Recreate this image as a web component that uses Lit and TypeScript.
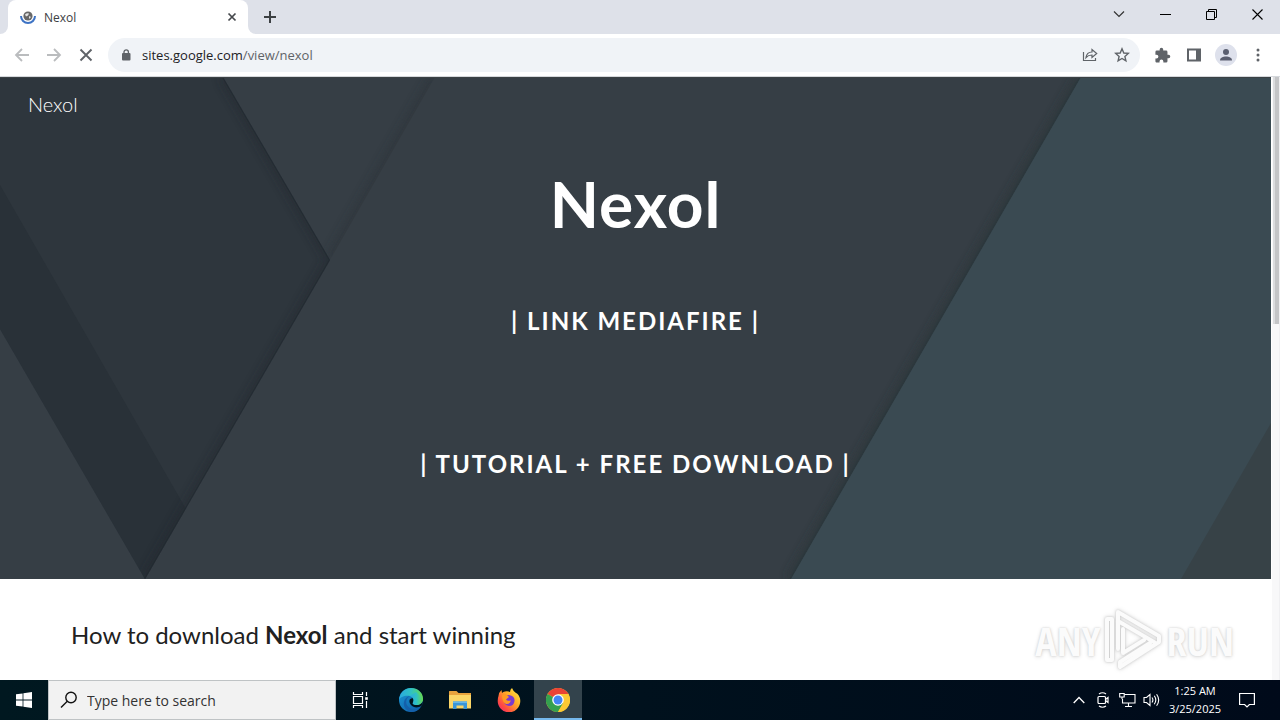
import { LitElement, html, css } from "lit";
import { customElement } from "lit/decorators.js";

@customElement("browser-chrome")
class BrowserChrome extends LitElement {
  static styles = css`
    :host { display: block; font-family: "Open Sans", "Noto Sans", sans-serif; color: #3c4043; }
    button { border: 0; padding: 0; margin: 0; background: none; color: inherit; display: grid; place-items: center; }
    svg { display: block; }
    .tabs { display: flex; height: 34px; background: #dee1e9; align-items: stretch; }
    .edge { width: 8px; background: #fff; }
    .edge i { display: block; height: 34px; background: #dee1e9; border-bottom-right-radius: 8px; }
    .edge.right i { border-radius: 0 0 0 8px; }
    .tab { width: 240px; background: #fff; border-radius: 8px 8px 0 0; display: flex; align-items: center; box-sizing: border-box; padding: 0 8px 0 12px; gap: 8px; font-size: 12px; }
    .tab .name { flex: 1; }
    .close { width: 16px; height: 16px; }
    .new { width: 28px; }
    .grow { flex: 1; }
    .win { width: 46px; height: 28px; color: #111; }
    .bar { display: flex; height: 42px; background: #fff; align-items: center; border-bottom: 1px solid #d5d8dc; padding: 0 6px; }
    .nav { width: 32px; height: 32px; color: #5f6368; }
    .nav:disabled { color: #babcbe; }
    .omni { flex: 1; display: flex; align-items: center; height: 34px; border-radius: 17px; background: #f0f3f7; margin: 0 6px; padding: 0 2px 0 10px; }
    .lock { width: 16px; display: grid; place-items: center; }
    .url { flex: 1; min-width: 0; padding: 0 0 0 8px; font-size: 13px; color: #5f6368; }
    .url b { font-weight: 400; color: #202124; }
    .avatar { width: 22px; height: 22px; border-radius: 50%; background: #dee1ec; display: grid; place-items: center; }
  `;
  render() {
    return html`
      <div class="tabs">
        <div class="edge"><i></i></div>
        <div class="tab">
          <svg width="16" height="16" viewBox="0 0 16 16">
            <circle cx="8" cy="7" r="4.600" fill="#686868"/>
            <path d="M5 5.500q2-2 4-1l-1 2-2 1zM9 7l2 1-2 2z" fill="#e5e5e5"/>
            <path d="M1 7a7 7 0 0 0 14 0" fill="none" stroke="#3e73c4" stroke-width="2"/>
          </svg>
          <span class="name">Nexol</span>
          <button class="close" aria-label="Close tab">
            <svg width="10" height="10" viewBox="0 0 10 10"><path d="M1.500 1.500l7 7M8.500 1.500l-7 7" stroke="#45484c" stroke-width="1.700"/></svg>
          </button>
        </div>
        <div class="edge right"><i></i></div>
        <button class="new" aria-label="New tab">
          <svg width="12" height="12" viewBox="0 0 12 12"><path d="M6 0v12M0 6h12" stroke="#3c4043" stroke-width="2"/></svg>
        </button>
        <div class="grow"></div>
        <button class="win" aria-label="Search tabs"><svg width="12" height="12" viewBox="0 0 12 12"><path d="M1 3.500l5 5 5-5" fill="none" stroke="#333" stroke-width="1.200"/></svg></button>
        <button class="win" aria-label="Minimize"><svg width="11" height="11" viewBox="0 0 11 11"><path d="M0 5.500h11" stroke="#000"/></svg></button>
        <button class="win" aria-label="Restore"><svg width="11" height="11" viewBox="0 0 11 11" fill="none" stroke="#000"><path d="M.5 2.500h8v8h-8zM2.500 2.500v-2h8v8h-2"/></svg></button>
        <button class="win" aria-label="Close"><svg width="11" height="11" viewBox="0 0 11 11"><path d="M.5.5l10 10M10.500.5l-10 10" stroke="#000" stroke-width="1.100"/></svg></button>
      </div>
      <div class="bar">
        <button class="nav" disabled aria-label="Back"><svg width="16" height="14" viewBox="0 0 16 14" fill="none" stroke="currentColor" stroke-width="1.800"><path d="M15 7H2M8 1L2 7l6 6"/></svg></button>
        <button class="nav" disabled aria-label="Forward"><svg width="16" height="14" viewBox="0 0 16 14" fill="none" stroke="currentColor" stroke-width="1.800"><path d="M1 7h13M8 1l6 6-6 6"/></svg></button>
        <button class="nav" aria-label="Stop"><svg width="14" height="14" viewBox="0 0 14 14"><path d="M1.500 1.500l11 11M12.500 1.500l-11 11" stroke="currentColor" stroke-width="1.900"/></svg></button>
        <div class="omni">
          <span class="lock"><svg width="10" height="12" viewBox="0 0 10 12"><rect x="1" y="4" width="8.500" height="7.500" rx="1" fill="#5f6368"/><path d="M3 5V3a2.200 2.200 0 0 1 4.400 0v2" fill="none" stroke="#5f6368" stroke-width="1.300"/></svg></span>
          <div class="url"><b>sites.google.com</b>/view/nexol</div>
          <button class="nav" aria-label="Share"><svg width="16" height="16" viewBox="0 0 16 16" fill="none" stroke="currentColor" stroke-width="1.200"><path d="M1.500 5v8.500h12V11M4 10.500C4.500 7 6.500 5 10 5V2.500L14.700 6.500 10 10.500V8C7.500 8 5.500 8.700 4 10.500z"/></svg></button>
          <button class="nav" aria-label="Bookmark"><svg width="16" height="16" viewBox="0 0 16 16" fill="none" stroke="currentColor" stroke-width="1.400"><path d="M8 1.800l1.800 4.200 4.500.4-3.400 3 1 4.400L8 11.500l-3.900 2.300 1-4.400-3.400-3 4.500-.4z"/></svg></button>
        </div>
        <button class="nav" aria-label="Extensions"><svg width="17" height="17" viewBox="0 0 24 24"><path fill="currentColor" d="M20.500 11H19V7a2 2 0 0 0-2-2h-4V3.500a2.500 2.500 0 0 0-5 0V5H4a2 2 0 0 0-2 2v3.800h1.500a2.700 2.700 0 0 1 0 5.400H2V20c0 1.100.9 2 2 2h3.800v-1.500a2.700 2.700 0 0 1 5.400 0V22H17a2 2 0 0 0 2-2v-4h1.500a2.500 2.500 0 0 0 0-5z"/></svg></button>
        <button class="nav" aria-label="Side panel"><svg width="14" height="14" viewBox="0 0 14 14"><path fill="currentColor" fill-rule="evenodd" d="M0 .5h14v13H0zM2 2.500v9h7v-9z"/></svg></button>
        <button class="nav" aria-label="Profile"><span class="avatar"><svg width="14" height="14" viewBox="0 0 14 14" fill="#5b5f70"><circle cx="7" cy="4" r="3"/><path d="M1 12.500C1 9.500 4 8.500 7 8.500s6 1 6 4z"/></svg></span></button>
        <button class="nav" aria-label="Menu"><svg width="4" height="14" viewBox="0 0 4 14" fill="currentColor"><circle cx="2" cy="2" r="1.500"/><circle cx="2" cy="7" r="1.500"/><circle cx="2" cy="12" r="1.500"/></svg></button>
      </div>`;
  }
}

@customElement("site-page")
class SitePage extends LitElement {
  static styles = css`
    :host { display: flex; flex: 1; min-height: 0; overflow: hidden; background: #fff; font-family: Lato, sans-serif; position: relative; }
    .page { flex: 1; min-width: 0; }
    .hero { position: relative; box-sizing: border-box; height: 502px; color: #fff; text-align: center; }
    .art { position: absolute; inset: 0; width: 100%; height: 100%; }
    .content { position: relative; display: flex; flex-direction: column; align-items: center; }
    .site { align-self: flex-start; color: #fff; text-decoration: none; font-size: 20px; font-weight: 300; line-height: 24px; padding: 15px 28px 16px; }
    h1 { margin: 32px 0 0; font-size: 64px; line-height: 80px; font-weight: 700; letter-spacing: 1px; }
    .link { color: #fff; text-decoration: none; font-size: 24px; line-height: 32px; font-weight: 700; letter-spacing: 2px; margin-top: 61px; }
    .link + .link { margin-top: 111px; }
    h2 { margin: 0; padding: 40px 71px 0; font-size: 24px; line-height: 32px; font-weight: 400; color: #212121; }
    .scroll { width: 9px; background: #f8f8f9; border-left: 1px solid #fff; border-right: 1px solid #f0f0f2; box-sizing: border-box; display: flex; justify-content: flex-end; align-items: flex-start; }
    .thumb { width: 6px; height: 41%; box-sizing: border-box; background: #c4c5c7; border-left: 2px solid #dcdddf; }
    .mark { position: absolute; right: 46px; bottom: 4px; display: flex; align-items: center; gap: 4px; font: 40px/70px "Open Sans Condensed", "Liberation Sans Narrow", sans-serif; color: #fbfbfb; text-shadow: 0 0 2px #ccc, 0 1px 4px #ddd; }
    .mark svg { filter: drop-shadow(0 0 1px #ccc) drop-shadow(0 0 2px #ddd); }
  `;
  render() {
    return html`
      <main class="page">
        <section class="hero">
          <svg class="art" viewBox="0 0 1271 502" preserveAspectRatio="none">
            <defs>
              <filter id="soft" x="-20%" y="-20%" width="140%" height="140%"><feGaussianBlur stdDeviation="5"/></filter>
              <clipPath id="dark"><path d="M0 0H223L330 183 145 502 0 252z"/></clipPath>
              <clipPath id="mid"><path d="M223 0H435L330 183z"/></clipPath>
              <clipPath id="wide"><path d="M435 0H1081L791 502H145z"/></clipPath>
            </defs>
            <path d="M0 0H1271V502H0z" fill="#363e45"/>
            <path d="M0 0H223L330 183 145 502 0 252z" fill="#2e363d"/>
            <g clip-path="url(#dark)">
              <path d="M0 108L186 432 145 510-10 252z" fill="#293138"/>
              <path d="M223 0L330 183 145 502" fill="none" stroke="#20282e" stroke-width="7" opacity=".6" filter="url(#soft)"/>
              <path d="M223 0L330 183 145 502" fill="none" stroke="#222a31" stroke-width="2" opacity=".7"/>
            </g>
            <g clip-path="url(#mid)"><path d="M435 0L330 183" stroke="#293138" stroke-width="8" opacity=".6" filter="url(#soft)"/></g>
            <g clip-path="url(#wide)"><path d="M1081 0L791 502" stroke="#293638" stroke-width="8" opacity=".8" filter="url(#soft)"/><path d="M1081 0L791 502" stroke="#2c383d" stroke-width="3"/></g>
            <path d="M1081 0H1271V502H791z" fill="#3a4a52"/>
            <path d="M1271 346V502H1181z" fill="#374247"/>
            <path d="M0 .5H1271" stroke="#3b4144"/>
          </svg>
          <div class="content">
            <a class="site" href="#">Nexol</a>
            <h1>Nexol</h1>
            <a class="link" href="#">| LINK MEDIAFIRE |</a>
            <a class="link" href="#">| TUTORIAL + FREE DOWNLOAD |</a>
          </div>
        </section>
        <h2>How to download <b>Nexol</b> and start winning</h2>
      </main>
      <div class="scroll"><div class="thumb"></div></div>
      <div class="mark"><span>ANY</span>
        <svg width="58" height="64" viewBox="0 0 58 64" fill="none" stroke="#fbfbfb" stroke-width="4" stroke-linejoin="round" stroke-linecap="round">
          <path d="M14 40V3L55 27V33L16 58V53L46 34M14 12L50 33M19 20V44L40 31M8 10H3V51H8V10"/>
        </svg><span>RUN</span></div>`;
  }
}

@customElement("task-bar")
class TaskBar extends LitElement {
  static styles = css`
    :host { display: flex; height: 40px; background: linear-gradient(90deg, #001820, #000a1a); color: #fff; font-family: "Open Sans", "Noto Sans", sans-serif; }
    button { border: 0; padding: 0; background: none; color: inherit; display: grid; place-items: center; }
    svg { display: block; }
    .start { width: 48px; }
    .search { width: 288px; box-sizing: border-box; display: flex; align-items: center; background: #f2f2f2; border: 1px solid #bfc3c5; padding-left: 11px; gap: 9px; }
    .search input { flex: 1; min-width: 0; border: 0; padding: 0; background: none; outline: 0; font: 14px "Open Sans", "Noto Sans", sans-serif; color: #222; }
    .search input::placeholder { color: #333; opacity: 1; }
    .app { width: 48px; }
    .view { margin-right: 2px; }
    .apps { display: flex; gap: 1px; }
    .on { background: #33434c; box-shadow: inset 0 -2px #76b9ed; }
    .grow { flex: 1; }
    .tray { width: 24px; }
    .clock { width: 64px; display: flex; flex-direction: column; justify-content: center; text-align: center; font-size: 11px; line-height: 18px; }
    .note { width: 40px; margin-right: 13px; }
  `;
  render() {
    return html`
      <button class="start" aria-label="Start"><svg width="16" height="16" viewBox="0 0 16 16"><path fill="#fff" d="M0 2.300L6.600 1.400V7.600H0zM7.400 1.300L16 0V7.600H7.400zM0 8.400H6.600V14.600L0 13.700zM7.400 8.400H16V16L7.400 14.700z"/></svg></button>
      <label class="search">
        <svg width="18" height="18" viewBox="0 0 18 18" fill="none" stroke="#111" stroke-width="1.400"><circle cx="11" cy="6.500" r="5.200"/><path d="M7.300 10.200L1 16.500"/></svg>
        <input type="text" placeholder="Type here to search" aria-label="Type here to search">
      </label>
      <div class="apps">
      <button class="app view" aria-label="Task view"><svg width="18" height="18" viewBox="0 0 18 18" fill="none" stroke="#fff" stroke-width="1.200"><path d="M2.500 1v2.500h9V1M2.500 17v-2.500h9V17M2.500 5.500h9v7h-9zM15.500 1v4M15.500 10v7"/><rect x="14.200" y="6.200" width="2.600" height="2.600" fill="#fff" stroke="none"/></svg></button>
      <button class="app" aria-label="Microsoft Edge"><svg width="24" height="24" viewBox="0 0 24 24">
        <defs><linearGradient id="e1" x1="0" x2="1"><stop offset="0" stop-color="#2aa9e0"/><stop offset=".5" stop-color="#2fc2c4"/><stop offset="1" stop-color="#66d94f"/></linearGradient><linearGradient id="e2" x1="0" x2="1" y2="1"><stop offset="0" stop-color="#1c98d5"/><stop offset="1" stop-color="#0c59a4"/></linearGradient></defs>
        <circle cx="12" cy="12" r="12" fill="url(#e2)"/>
        <path d="M0 12C1 4 6 0 12 0c7 0 12 5 12 10.500 0 4-3 6.500-6.500 6.500-2.500 0-4.500-1-3.500-2.500 1.500-2.500.5-5.500-3-6.500C6 7 1 9 0 12z" fill="url(#e1)"/>
        <path d="M11 8C7 10 6 15 9 18.500c3 3.500 8 3.500 12 1.500-2 2.500-5 4-9 4-5-1-8-6-7-10 .5-3 3-5.500 6-6z" fill="#1460aa"/>
        <path d="M24 11c0 4-3 6-6.500 6-2.500 0-4.500-1-3.500-2.500.8-1.500.7-3-.2-4.200C10 10 9.500 14 12 17c2.500 3 7 3 10.500 1 .8-2 1.500-4 1.500-7z" fill="#00141d"/>
        <path d="M14 14.500c1.500-2.500.5-5.500-3-6.500L17 4l7 6.500c0 4-3 6.500-6.500 6.500-2.500 0-4.500-1-3.500-2.500z" fill="url(#e1)"/>
      </svg></button>
      <button class="app" aria-label="File Explorer"><svg width="22" height="20" viewBox="0 0 22 20"><path d="M0 1.500Q0 1 .5 1H7.500l2 2H22V18H0z" fill="#e8a33d"/><path d="M0 5H22V18.500H0z" fill="#fbd667"/><path d="M4 11.500H18V19H14.500V15.500H7.500V19H4z" fill="#3a96d8"/><path d="M4 11.500H18V13H4z" fill="#67b7e9"/></svg></button>
      <button class="app" aria-label="Firefox"><svg width="24" height="24" viewBox="0 0 24 24">
        <defs><linearGradient id="f" x1="1" y1="0" x2="0" y2="1"><stop offset="0" stop-color="#fff04a"/><stop offset=".4" stop-color="#ffae27"/><stop offset=".75" stop-color="#ff4a42"/><stop offset="1" stop-color="#e8207d"/></linearGradient></defs>
        <path d="M1.500 8Q2 4 4.500 2L5 5Q6 3.500 8 3.500q3-.5 5 .500Q13 1.500 15 0q1 3 4 5l1 .500q3.300 3 3.300 7.500A11.300 11.300 0 0 1 .7 13Q.7 10 1.500 8z" fill="url(#f)"/>
        <path d="M7 11q0-4 5-4 6 1 5.500 6T12 18q-4-.5-5-4z" fill="#7a3ad0"/><path d="M5 7l4-1 3 3-3 2.500q1 2 5 1-1.500 4-5 3.500Q5 14 5 7z" fill="#ff9a22"/>
      </svg></button>
      <button class="app on" aria-label="Chrome"><svg width="24" height="24" viewBox="0 0 24 24">
        <circle cx="12" cy="12" r="12" fill="#fcc934"/>
        <path d="M12 12L1.600 6A12 12 0 0 1 22.400 6z" fill="#ea4335"/><path d="M1.600 6A12 12 0 0 0 12 24L17.200 15 12 12z" fill="#34a04f"/><path d="M12 6H22.400A12 12 0 0 1 12 24L17.200 15z" fill="#fcc934"/>
        <circle cx="12" cy="12" r="5.800" fill="#fff"/><circle cx="12" cy="12" r="4.500" fill="#4285f4"/>
      </svg></button>
      </div>
      <div class="grow"></div>
      <button class="tray" aria-label="Show hidden icons"><svg width="12" height="8" viewBox="0 0 12 8"><path d="M.7 7L6 1.500 11.300 7" fill="none" stroke="#fff" stroke-width="1.300"/></svg></button>
      <button class="tray" aria-label="Meet now"><svg width="14" height="18" viewBox="0 0 14 18" fill="none" stroke="#fff" stroke-width="1.200"><rect x="2" y="5.500" width="7.500" height="7" rx="1"/><path d="M9.500 8.500l2.500-2v5l-2.500-2M3 3Q6.500.5 10 3M3 15Q6.500 17.500 10 15"/></svg></button>
      <button class="tray" aria-label="Network"><svg width="17" height="16" viewBox="0 0 17 16" fill="none" stroke="#fff" stroke-width="1.100"><path d="M5.500 2.500H16V11H3.500V7M9.500 11v3.500M6 14.500h7"/><path d="M.7 1.500h4.500v3.500H.7zM3 5v2"/></svg></button>
      <button class="tray" aria-label="Volume"><svg width="17" height="16" viewBox="0 0 17 16" fill="none" stroke="#fff" stroke-width="1.100"><path d="M1 5.500h2.500L7 2.500v11l-3.500-3H1zM9 5.500q1.800 2.500 0 5M11.300 3.800q3 4.200 0 8.400M13.600 2.200q4.200 5.800 0 11.600"/></svg></button>
      <div class="clock"><span>1:25 AM</span><span>3/25/2025</span></div>
      <button class="note" aria-label="Notifications"><svg width="16" height="16" viewBox="0 0 16 16" fill="none" stroke="#fff" stroke-width="1.200"><path d="M.6 1.500h14.800v11h-5L8 15l-2.400-2.500h-5z"/></svg></button>`;
  }
}

@customElement("app-root")
class AppRoot extends LitElement {
  static styles = css`
    :host { display: flex; flex-direction: column; height: 100vh; overflow: hidden; }
  `;
  render() {
    return html`<browser-chrome></browser-chrome><site-page></site-page><task-bar></task-bar>`;
  }
}
